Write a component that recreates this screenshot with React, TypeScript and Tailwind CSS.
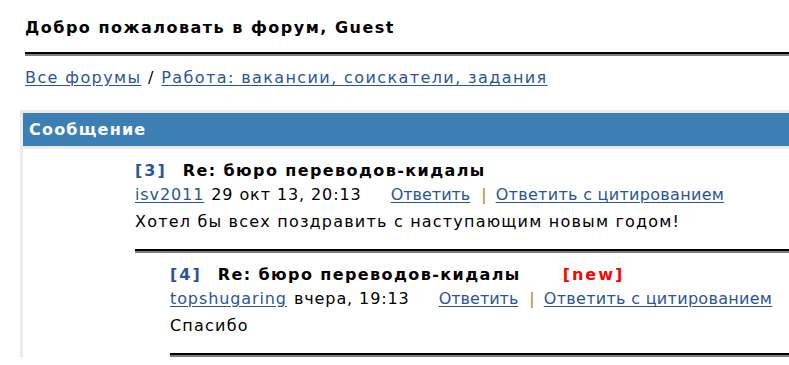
import React from 'react';

const font = { fontFamily: '"DejaVu Sans", Verdana, sans-serif' };

const Rule: React.FC<{ className?: string }> = ({ className = '' }) => (
    <div className={`h-[4px] border-t-2 border-b-2 border-t-black border-b-[#808080] ${className}`} />
);

interface PostProps {
    num: number;
    title: string;
    author: string;
    date: string;
    text: string;
    isNew?: boolean;
}

const Post: React.FC<PostProps> = ({ num, title, author, date, text, isNew }) => (
    <div>
        <div className="flex items-baseline whitespace-nowrap text-[16px] font-bold leading-[19px] tracking-[1.4px]">
            <span className="text-[#2a5599] tracking-[2px]">[{num}]</span>
            <span className="ml-[16px] text-black">{title}</span>
            {isNew && <span className="ml-[42px] text-[#ff0000] tracking-[2px]">[new]</span>}
        </div>
        <div className="mt-[5px] flex items-baseline whitespace-nowrap text-[16px] leading-[19px]">
            <a href="#" className="tracking-[0.9px] text-[#2a5599] underline underline-offset-2">{author}</a>
            <span className="ml-[7px] tracking-[0.9px] text-black">{date}</span>
            <a href="#" className="ml-[29px] text-[#2a5599] underline underline-offset-2">Ответить</a>
            <span className="ml-[11px] mr-[9px] text-[#c07a20]">|</span>
            <a href="#" className="tracking-[0.3px] text-[#2a5599] underline underline-offset-2">Ответить с цитированием</a>
        </div>
        <p className="mt-[8px] text-[16px] leading-[19px] tracking-[1.2px] text-black">{text}</p>
    </div>
);

export default function App() {
    return (
        <div className="h-[365px] w-[789px] overflow-hidden bg-white" style={font}>
            <div className="pl-[25px] pt-[18px]">
                <h1 className="text-[16px] font-bold leading-[19px] tracking-[1.5px] text-black">Добро пожаловать в форум, Guest</h1>
                <Rule className="mt-[15px]" />
                <div className="mt-[12px] text-[16px] leading-[19px] tracking-[1.4px] text-black">
                    <a href="#" className="text-[#2a5599] underline underline-offset-2">Все форумы</a>
                    {' / '}
                    <a href="#" className="text-[#2a5599] underline underline-offset-2">Работа: вакансии, соискатели, задания</a>
                </div>
            </div>

            {/* Message block */}
            <div className="ml-[20px] mt-[23px] border-l-[3px] border-t-[3px] border-[#ebebeb]">
                <div className="flex h-[36px] items-center border-b-[3px] border-[#ebebeb] bg-[#3c7fb5] pl-[6px]">
                    <span className="text-[16px] font-bold tracking-[1.2px] text-white">Сообщение</span>
                </div>
                <div className="pl-[112px] pt-[12px]">
                    <Post
                        num={3}
                        title="Re: бюро переводов-кидалы"
                        author="isv2011"
                        date="29 окт 13, 20:13"
                        text="Хотел бы всех поздравить с наступающим новым годом!"
                    />
                    <Rule className="mt-[18px]" />
                    <div className="pl-[35px] pt-[12px]">
                        <Post
                            num={4}
                            title="Re: бюро переводов-кидалы"
                            author="topshugaring"
                            date="вчера, 19:13"
                            text="Спасибо"
                            isNew
                        />
                        <Rule className="mt-[18px]" />
                    </div>
                </div>
            </div>
        </div>
    );
}
